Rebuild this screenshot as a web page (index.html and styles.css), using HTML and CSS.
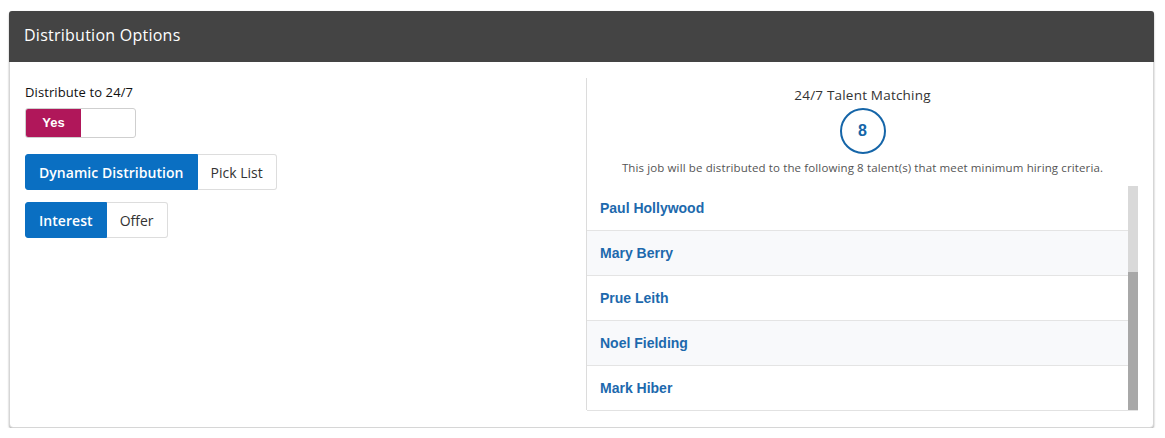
FILE: index.html
```html
<!DOCTYPE html>
<html lang="en">
<head>
    <meta charset="UTF-8">
    <meta name="viewport" content="width=device-width, initial-scale=1.0">
    <title>Distribution Options</title>
    <link rel="stylesheet" href="styles.css">
</head>
<body>
    <div class="card">
        <div class="card-header">Distribution Options</div>
        <div class="card-body">
            <div class="left-col">
                <p class="field-label">Distribute to 24/7</p>
                <div class="toggle">
                    <span class="toggle-on">Yes</span>
                    <span class="toggle-off"></span>
                </div>

                <div class="btn-group">
                    <button class="seg-btn active">Dynamic Distribution</button>
                    <button class="seg-btn">Pick List</button>
                </div>
                <div class="btn-group">
                    <button class="seg-btn active">Interest</button>
                    <button class="seg-btn">Offer</button>
                </div>
            </div>

            <div class="right-col">
                <p class="match-title">24/7 Talent Matching</p>
                <div class="match-count">8</div>
                <p class="match-note">This job will be distributed to the following 8 talent(s) that meet minimum hiring criteria.</p>

                <div class="talent-box">
                    <ul class="talent-list">
                        <li>Paul Hollywood</li>
                        <li>Mary Berry</li>
                        <li>Prue Leith</li>
                        <li>Noel Fielding</li>
                        <li>Mark Hiber</li>
                    </ul>
                    <div class="scroll-track">
                        <div class="scroll-thumb"></div>
                    </div>
                </div>
            </div>
        </div>
    </div>
</body>
</html>
```

FILE: styles.css
```css
body {
    margin: 0;
    padding: 11px 11px 0 9px;
    background-color: white;
    font-family: "Open Sans", Arial, sans-serif;
}

.card {
    border: 1px solid #d6d6d6;
    border-radius: 4px;
    box-shadow: 0 1px 2px rgba(0, 0, 0, 0.35);
    background-color: white;
    height: 417px;
    box-sizing: border-box;
}

.card-header {
    background-color: #444444;
    color: white;
    font-size: 16px;
    letter-spacing: 0.25px;
    height: 51px;
    line-height: 48px;
    padding: 0 15px;
    border-radius: 3px 3px 0 0;
    margin: -1px -1px 0 -1px;
}

.card-body {
    display: grid;
    grid-template-columns: 562px 551px;
    padding: 16px 15px 0 15px;
}

.left-col {
    border-right: 1px solid #dcdcdc;
    height: 332px;
}

.field-label {
    margin: 6px 0 8px 0;
    font-size: 13px;
    letter-spacing: 0.1px;
    color: #111;
    line-height: 16px;
}

.toggle {
    display: flex;
    width: 111px;
    height: 30px;
    border: 1px solid #cfcfcf;
    border-radius: 3px;
    box-sizing: border-box;
    overflow: hidden;
    margin-bottom: 16px;
}

.toggle-on {
    width: 55px;
    background-color: #b0175a;
    color: white;
    font-family: "Liberation Sans", Arial, sans-serif;
    font-weight: bold;
    font-size: 13px;
    line-height: 28px;
    text-align: center;
}

.toggle-off {
    flex: 1;
}

.btn-group {
    display: flex;
    margin-bottom: 12px;
}

.seg-btn {
    font-family: "Open Sans", Arial, sans-serif;
    font-size: 14px;
    height: 36px;
    padding: 0 13px;
    border: 1px solid #dddddd;
    background-color: white;
    color: #333;
    cursor: pointer;
}

.seg-btn:first-child {
    border-radius: 3px 0 0 3px;
}

.seg-btn:last-child {
    border-radius: 0 3px 3px 0;
    border-left: none;
}

.seg-btn.active {
    background-color: #0a6fc2;
    border-color: #0a6fc2;
    color: white;
    font-weight: 600;
    letter-spacing: 0.05px;
}

.right-col {
    display: flex;
    flex-direction: column;
    align-items: center;
}

.match-title {
    margin: 9px 0 5px 0;
    font-size: 13.5px;
    letter-spacing: 0.2px;
    color: #333;
    line-height: 16px;
}

.match-count {
    width: 42px;
    height: 42px;
    border: 2px solid #1565a8;
    border-radius: 50%;
    color: #1565a8;
    font-family: "Liberation Sans", Arial, sans-serif;
    font-weight: bold;
    font-size: 16px;
    line-height: 42px;
    text-align: center;
}

.match-note {
    margin: 7px 0 11px 0;
    font-size: 11.5px;
    letter-spacing: 0.12px;
    color: #555;
    line-height: 14px;
}

.talent-box {
    display: flex;
    width: 100%;
    height: 224px;
    border-bottom: 1px solid #e2e2e2;
}

.talent-list {
    list-style: none;
    margin: 0;
    padding: 0;
    flex: 1;
    overflow: hidden;
}

.talent-list li {
    height: 44px;
    line-height: 44px;
    padding: 0 13px;
    border-bottom: 1px solid #e4e4e4;
    font-family: "Liberation Sans", Arial, sans-serif;
    font-weight: bold;
    font-size: 14px;
    color: #1d69ad;
}

.talent-list li:nth-child(even) {
    background-color: #f8f9fb;
}

.talent-list li:last-child {
    border-bottom: none;
}

.scroll-track {
    width: 10px;
    background-color: #d9d9d9;
    display: flex;
    flex-direction: column;
    justify-content: flex-end;
}

.scroll-thumb {
    height: 138px;
    background-color: #a8a8a8;
}
```
